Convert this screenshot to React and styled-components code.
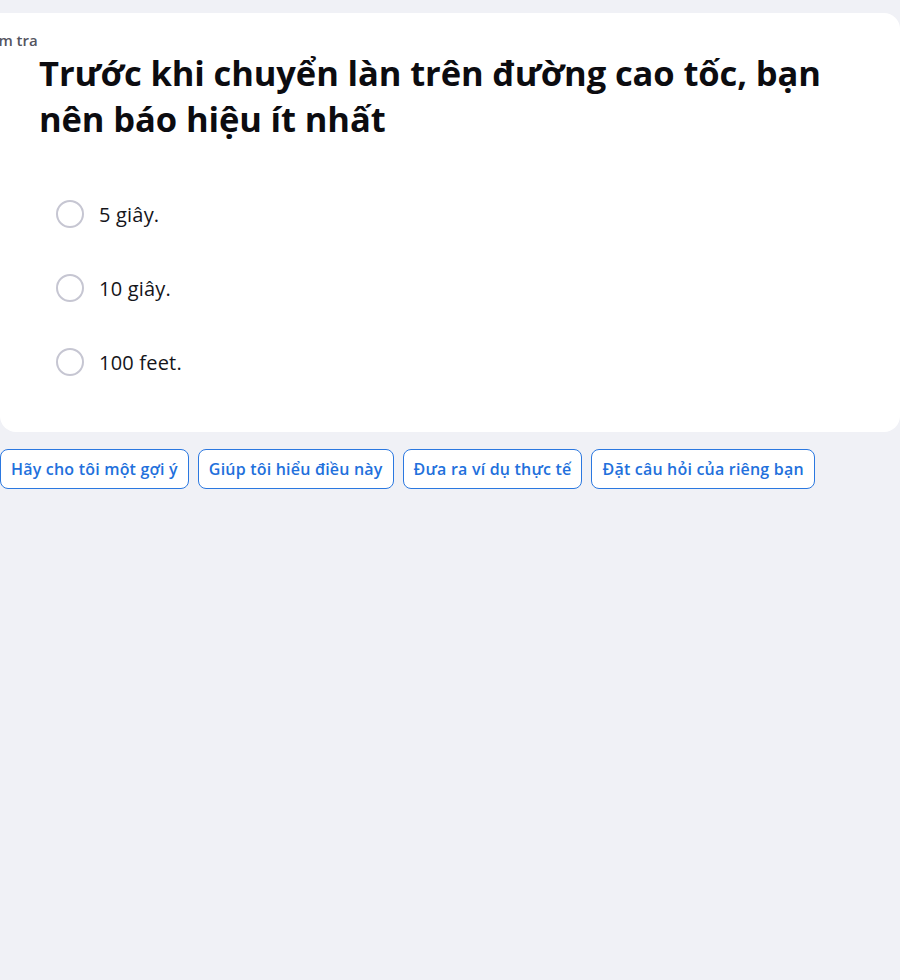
import React from "react";
import styled, { createGlobalStyle } from "styled-components";

const GlobalStyle = createGlobalStyle`
  body {
    margin: 0;
    background: #f0f1f6;
    font-family: "Open Sans", "Noto Sans", sans-serif;
    overflow: hidden;
  }
`;

const Page = styled.div`
  padding-top: 13px;
  height: 967px;
  overflow: hidden;
`;

const Card = styled.div`
  width: 900px;
  box-sizing: border-box;
  background: #fff;
  border-radius: 0 16px 16px 16px;
  padding: 17px 0 56px 0;
`;

const Label = styled.div`
  margin-left: -24px;
  font-size: 15px;
  font-weight: 600;
  color: #55555f;
  height: 20px;
`;

const Title = styled.h1`
  margin: 0 0 0 39px;
  width: 810px;
  font-size: 34.5px;
  line-height: 46px;
  font-weight: 700;
  letter-spacing: -0.1px;
  color: #0c0c10;
`;

const Options = styled.div`
  display: flex;
  flex-direction: column;
  gap: 46px;
  margin: 58px 0 0 56px;
`;

const Option = styled.label`
  display: flex;
  align-items: center;
  gap: 15px;
  font-size: 20px;
  letter-spacing: 0.2px;
  color: #15151a;
  cursor: pointer;
`;

const Radio = styled.span`
  width: 28px;
  height: 28px;
  box-sizing: border-box;
  border: 2px solid #c6c6d2;
  border-radius: 50%;
  flex-shrink: 0;
`;

const Chips = styled.div`
  display: flex;
  gap: 9px;
  margin-top: 17px;
`;

const Chip = styled.button`
  height: 40px;
  padding: 0 10px;
  border: 1px solid #2b78e0;
  border-radius: 8px;
  background: #fff;
  color: #2270dc;
  font-family: "Open Sans", "Noto Sans", sans-serif;
  font-size: 16px;
  letter-spacing: 0.2px;
  font-weight: 600;
  cursor: pointer;
  white-space: nowrap;
`;

const answers = ["5 giây.", "10 giây.", "100 feet."];
const prompts = [
  "Hãy cho tôi một gợi ý",
  "Giúp tôi hiểu điều này",
  "Đưa ra ví dụ thực tế",
  "Đặt câu hỏi của riêng bạn",
];

export default function App() {
  return (
    <Page>
      <GlobalStyle />
      <Card>
        <Label>Kiểm tra</Label>
        <Title>Trước khi chuyển làn trên đường cao tốc, bạn nên báo hiệu ít nhất</Title>
        <Options>
          {answers.map((a) => (
            <Option key={a}>
              <Radio />
              {a}
            </Option>
          ))}
        </Options>
      </Card>
      <Chips>
        {prompts.map((p) => (
          <Chip key={p}>{p}</Chip>
        ))}
      </Chips>
    </Page>
  );
}
